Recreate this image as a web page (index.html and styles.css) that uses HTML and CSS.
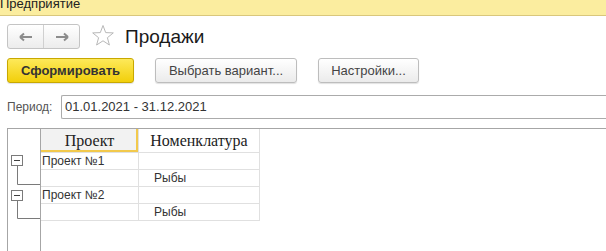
FILE: index.html
```html
<!DOCTYPE html>
<html lang="ru">

<head>
    <meta charset="UTF-8">
    <meta name="viewport" content="width=device-width, initial-scale=1.0">
    <title>Продажи</title>
    <link rel="stylesheet" href="styles.css">
</head>

<body>
    <div class="titlebar">Предприятие</div>

    <div class="page">
        <div class="header">
            <div class="nav">
                <button class="nav-btn" title="Назад">
                    <svg width="14" height="10" viewBox="0 0 14 10">
                        <path d="M1 5 H13 M1 5 L5 1.5 M1 5 L5 8.5" stroke="#8c8c8c" stroke-width="2" fill="none" />
                    </svg>
                </button>
                <button class="nav-btn" title="Вперед">
                    <svg width="14" height="10" viewBox="0 0 14 10">
                        <path d="M13 5 H1 M13 5 L9 1.5 M13 5 L9 8.5" stroke="#8c8c8c" stroke-width="2" fill="none" />
                    </svg>
                </button>
            </div>
            <svg class="star" width="24" height="23" viewBox="0 0 24 23">
                <path d="M12 1.5 L14.7 8.6 L22.3 8.9 L16.4 13.7 L18.4 21 L12 16.8 L5.6 21 L7.6 13.7 L1.7 8.9 L9.3 8.6 Z" fill="none" stroke="#b8b8b8" stroke-width="1" />
            </svg>
            <h1 class="title">Продажи</h1>
        </div>

        <div class="toolbar">
            <button class="btn btn-main">Сформировать</button>
            <button class="btn btn-variant">Выбрать вариант...</button>
            <button class="btn btn-settings">Настройки...</button>
        </div>

        <div class="period">
            <label>Период:</label>
            <div class="period-input">01.01.2021 - 31.12.2021</div>
        </div>
    </div>

    <div class="report">
        <div class="tree">
            <div class="tree-head"></div>
            <div class="tree-group">
                <svg width="32" height="34" viewBox="0 0 32 34">
                    <rect x="3.5" y="3.5" width="11" height="10" fill="#fff" stroke="#7a7a7a" />
                    <path d="M6 8.5 H12" stroke="#404040" />
                    <path d="M9.5 13.5 V32.5 H32" stroke="#7a7a7a" fill="none" />
                </svg>
            </div>
            <div class="tree-group">
                <svg width="32" height="34" viewBox="0 0 32 34">
                    <rect x="3.5" y="4.5" width="11" height="10" fill="#fff" stroke="#7a7a7a" />
                    <path d="M6 9.5 H12" stroke="#404040" />
                    <path d="M9.5 14.5 V32.5 H32" stroke="#7a7a7a" fill="none" />
                </svg>
            </div>
        </div>

        <table class="grid">
            <tr>
                <th class="col-project current">Проект</th>
                <th class="col-item">Номенклатура</th>
            </tr>
            <tr>
                <td>Проект №1</td>
                <td></td>
            </tr>
            <tr>
                <td></td>
                <td class="item">Рыбы</td>
            </tr>
            <tr>
                <td>Проект №2</td>
                <td></td>
            </tr>
            <tr>
                <td></td>
                <td class="item">Рыбы</td>
            </tr>
        </table>
    </div>
</body>

</html>
```

FILE: styles.css
```css
html,
body {
    height: 100%;
}

body {
    margin: 0;
    font-family: Arial, "Liberation Sans", sans-serif;
    color: #333;
    background: #fff;
    display: flex;
    flex-direction: column;
    overflow: hidden;
}

.titlebar {
    height: 15px;
    line-height: 8px;
    font-size: 13px;
    color: #222;
    background: #fbed9f;
    border-bottom: 1px solid #d9c77c;
    overflow: hidden;
}

.page {
    padding-left: 7px;
}

.header {
    display: flex;
    align-items: center;
    margin-top: 8px;
    height: 25px;
}

.nav {
    display: flex;
    width: 73px;
    height: 25px;
    box-sizing: border-box;
    border: 1px solid #c4c4c4;
    border-radius: 3px;
    background: linear-gradient(#ffffff, #ececec);
}

.nav-btn {
    flex: 1;
    border: none;
    background: none;
    padding: 0;
    display: flex;
    align-items: center;
    justify-content: center;
}

.nav-btn + .nav-btn {
    border-left: 1px solid #d0d0d0;
}

.star {
    margin-left: 11px;
    margin-top: -2px;
}

.title {
    margin: 0 0 0 10px;
    font-size: 19px;
    font-weight: normal;
    color: #1a1a1a;
}

.toolbar {
    display: flex;
    margin-top: 9px;
    height: 25px;
}

.btn {
    height: 25px;
    box-sizing: border-box;
    font-family: Arial, "Liberation Sans", sans-serif;
    font-size: 13px;
    color: #444;
    border: 1px solid #bdbdbd;
    border-radius: 3px;
    background: linear-gradient(#ffffff, #ebebeb);
    box-shadow: 0 1px 1px rgba(0, 0, 0, 0.12);
    padding: 0;
}

.btn-main {
    width: 127px;
    font-weight: bold;
    color: #333;
    border-color: #c8a800;
    background: linear-gradient(#fde95a, #f2cf0a);
}

.btn-variant {
    width: 142px;
    margin-left: 21px;
}

.btn-settings {
    width: 101px;
    margin-left: 21px;
}

.period {
    display: flex;
    align-items: center;
    margin-top: 12px;
    height: 24px;
}

.period label {
    font-size: 12px;
    color: #555;
    width: 54px;
}

.period-input {
    flex: 1;
    height: 24px;
    box-sizing: border-box;
    border: 1px solid #ababab;
    border-right: none;
    border-radius: 2px 0 0 2px;
    font-size: 13px;
    line-height: 22px;
    padding-left: 3px;
    color: #333;
}

.report {
    flex: 1;
    display: flex;
    align-items: flex-start;
    margin: 9px 0 0 7px;
    border-top: 1px solid #a6a6a6;
    border-left: 1px solid #a6a6a6;
}

.tree {
    width: 32px;
    align-self: stretch;
    border-right: 1px solid #a6a6a6;
}

.tree-head {
    height: 23px;
}

.tree-group {
    height: 34px;
}

.tree-group svg {
    display: block;
}

.grid {
    border-collapse: collapse;
    font-size: 12px;
    color: #333;
}

.grid th {
    font-family: "Liberation Serif", "Times New Roman", serif;
    font-weight: normal;
    font-size: 16px;
    color: #222;
    height: 23px;
    padding: 0;
    border-right: 1px solid #e0e0e0;
    border-bottom: 1px solid #e0e0e0;
}

.grid th.current {
    background: #f2f2f2;
    box-shadow: inset -2px -2px 0 #f2c94c;
}

.col-project {
    width: 97px;
}

.col-item {
    width: 120px;
}

.grid td {
    height: 16px;
    padding: 0 0 0 1px;
    border-right: 1px solid #e0e0e0;
    border-bottom: 1px solid #e0e0e0;
    vertical-align: middle;
}

.grid td.item {
    padding-left: 15px;
}
```
